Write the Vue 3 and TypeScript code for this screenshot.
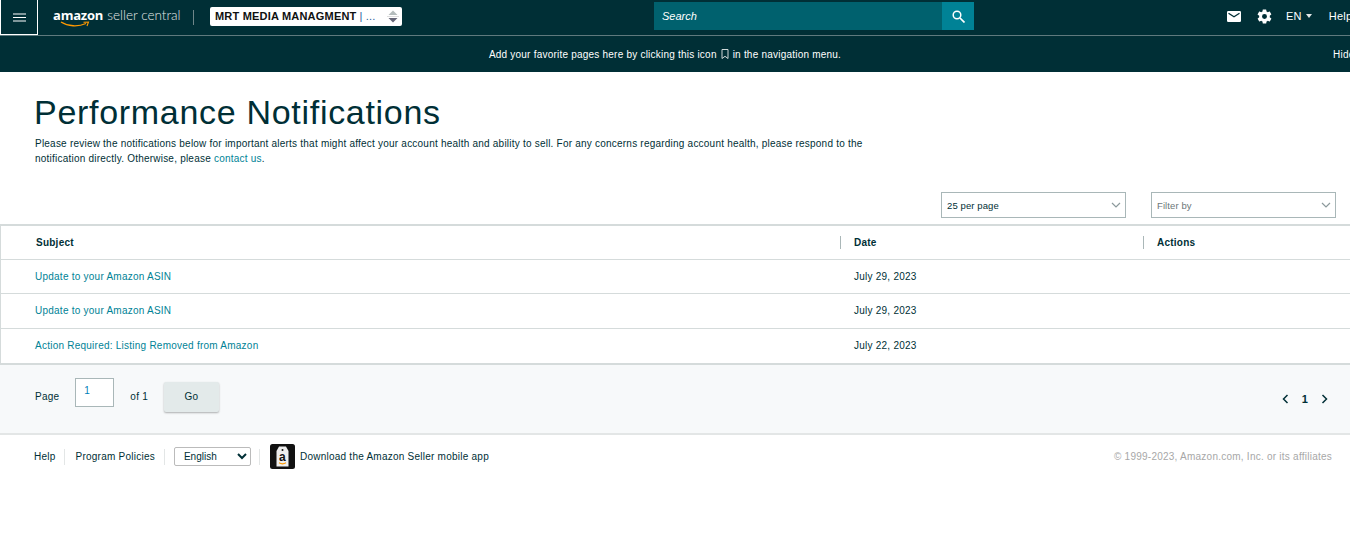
<script setup lang="ts">
const rows = [
  { subject: 'Update to your Amazon ASIN', date: 'July 29, 2023' },
  { subject: 'Update to your Amazon ASIN', date: 'July 29, 2023' },
  { subject: 'Action Required: Listing Removed from Amazon', date: 'July 22, 2023' },
]
</script>

<template>
  <div class="page">
    <header class="topbar">
      <div class="nav">
        <button class="menu-btn" aria-label="Menu">
          <svg width="13" height="9" viewBox="0 0 13 9"><path d="M0 1h13M0 4.500h13M0 8h13" stroke="#fff" stroke-width="1.200" fill="none" /></svg>
        </button>
        <div class="logo">
          <span class="logo-amazon">amazon</span>
          <span class="logo-seller">seller central</span>
          <svg class="logo-smile" width="30" height="7" viewBox="0 0 30 7">
            <path d="M1 1C8 5.500 18 6 26 2.500" stroke="#f90" stroke-width="1.300" fill="none" />
            <path d="M23.500 1.200L28.500 1L27 5" stroke="#f90" stroke-width="1.100" fill="none" />
          </svg>
        </div>
        <div class="logo-sep"></div>
        <div class="account">
          <span class="account-name">MRT MEDIA MANAGMENT</span>
          <span class="account-more">| ...</span>
          <svg class="account-arrows" width="14" height="16" viewBox="0 0 14 16">
            <path d="M7 2.500l4.500 4.500h-9z" fill="#b4bcbc" />
            <path d="M1 8.500h12" stroke="#ddd" stroke-width="1" />
            <path d="M2.500 10h9L7 14.500z" fill="#667" />
          </svg>
        </div>
        <div class="search">
          <span class="search-input">Search</span>
          <button class="search-btn" aria-label="Search">
            <svg width="13" height="13" viewBox="0 0 13 13">
              <circle cx="5" cy="5" r="3.800" stroke="#fff" stroke-width="1.500" fill="none" />
              <path d="M8 8l4.500 4.500" stroke="#fff" stroke-width="1.700" />
            </svg>
          </button>
        </div>
        <div class="nav-right">
          <svg class="mail" width="14" height="11" viewBox="0 0 14 11">
            <rect width="14" height="11" rx="1.200" fill="#fff" />
            <path d="M1.500 2.200L7 5.800l5.500-3.600" stroke="#002f36" stroke-width="1.300" fill="none" />
          </svg>
          <svg class="gear" width="17" height="17" viewBox="0 0 24 24">
            <path fill="#fff" d="M19.400 13c.04-.32.1-.66.1-1s-.06-.68-.1-1l2.100-1.650c.2-.15.25-.42.12-.64l-2-3.460c-.12-.22-.39-.3-.61-.22l-2.490 1c-.52-.4-1.080-.73-1.690-.98l-.38-2.650A.49.49 0 0 0 14 2h-4c-.25 0-.46.18-.49.42l-.38 2.650c-.61.25-1.170.59-1.690.98l-2.490-1c-.23-.09-.49 0-.61.22l-2 3.460c-.13.22-.07.49.12.64L4.570 11c-.04.32-.07.66-.07 1s.03.680.07 1l-2.110 1.650c-.19.15-.25.42-.12.64l2 3.460c.12.22.39.3.61.22l2.490-1c.52.4 1.080.73 1.690.98l.38 2.650c.03.24.24.42.49.42h4c.25 0 .46-.18.49-.42l.38-2.650c.61-.25 1.170-.59 1.690-.98l2.490 1c.23.09.49 0 .61-.22l2-3.460c.12-.22.07-.49-.12-.64L19.400 13zM12 15.500a3.500 3.500 0 1 1 0-7 3.500 3.500 0 0 1 0 7z" />
          </svg>
          <span class="lang">EN<i class="caret"></i></span>
          <span class="help">Help</span>
        </div>
      </div>
      <div class="banner">
        <span class="banner-text">
          Add your favorite pages here by clicking this icon
          <svg class="bookmark" width="8" height="10" viewBox="0 0 8 10"><path d="M1 .5h6v9L4 7.300 1 9.500z" stroke="#cfd8d8" fill="none" /></svg>
          in the navigation menu.
        </span>
        <span class="banner-hide">Hide</span>
      </div>
    </header>

    <main>
      <section class="intro">
        <h1>Performance Notifications</h1>
        <p>
          Please review the notifications below for important alerts that might affect your account health and ability to sell. For any concerns regarding account health, please respond to the notification directly. Otherwise, please
          <a class="contact">contact us</a>.
        </p>
      </section>

      <div class="filters">
        <div class="select select-page">
          <span>25 per page</span>
          <svg width="10" height="6" viewBox="0 0 10 6"><path d="M1 1l4 4 4-4" stroke="#8c9a9c" stroke-width="1.200" fill="none" /></svg>
        </div>
        <div class="select select-filter">
          <span>Filter by</span>
          <svg width="10" height="6" viewBox="0 0 10 6"><path d="M1 1l4 4 4-4" stroke="#8c9a9c" stroke-width="1.200" fill="none" /></svg>
        </div>
      </div>

      <div class="table">
        <div class="row head">
          <div class="cell subject">Subject</div>
          <div class="cell date">Date</div>
          <div class="cell actions">Actions</div>
        </div>
        <div v-for="(row, i) in rows" :key="i" class="row item">
          <div class="cell subject"><a>{{ row.subject }}</a></div>
          <div class="cell date">{{ row.date }}</div>
          <div class="cell actions"></div>
        </div>
      </div>

      <div class="pager">
        <span class="pager-label">Page</span>
        <div class="page-input">1</div>
        <span class="pager-of">of 1</span>
        <button class="go">Go</button>
        <div class="pager-nav">
          <svg width="7" height="10" viewBox="0 0 7 10"><path d="M5.500 1L1.500 5l4 4" stroke="#002f36" stroke-width="1.500" fill="none" /></svg>
          <b>1</b>
          <svg width="7" height="10" viewBox="0 0 7 10"><path d="M1.500 1l4 4-4 4" stroke="#002f36" stroke-width="1.500" fill="none" /></svg>
        </div>
      </div>
    </main>

    <footer class="footer">
      <a class="foot-link">Help</a>
      <i class="foot-sep sep-help"></i>
      <a class="foot-link">Program Policies</a>
      <i class="foot-sep"></i>
      <select class="foot-lang"><option>English</option></select>
      <i class="foot-sep sep-app"></i>
      <svg class="app-icon" width="25" height="25" viewBox="0 0 25 25">
        <rect width="25" height="25" rx="2.500" fill="#111" />
        <path d="M9 2.500h7L18.500 7v15.500h-12V7z" fill="#eee" />
        <circle cx="12.500" cy="6" r="1" fill="#111" />
        <path d="M9 18.800c2.200 1.300 4.800 1.300 7 0" stroke="#f90" stroke-width="1.100" fill="none" />
        <text x="12.500" y="17" text-anchor="middle" class="app-a">a</text>
      </svg>
      <a class="foot-link">Download the Amazon Seller mobile app</a>
      <span class="copyright">© 1999-2023, Amazon.com, Inc. or its affiliates</span>
    </footer>
  </div>
</template>

<style>
html, body {
  margin: 0;
  overflow: hidden;
  background: #fff;
}
</style>

<style scoped>
.page {
  width: 1350px;
  height: 533px;
  overflow: hidden;
  font-family: "Liberation Sans", Arial, sans-serif;
  font-size: 10px;
  letter-spacing: 0.24px;
  color: #002f36;
}

.topbar {
  background: #002f36;
  color: #fff;
}

.nav {
  display: flex;
  align-items: center;
  height: 35px;
  border-bottom: 1px solid #5f7a7e;
}

.menu-btn {
  width: 38px;
  height: 35px;
  flex: none;
  padding: 0;
  background: transparent;
  border: 1px solid #fff;
  border-top: 0;
  display: flex;
  align-items: center;
  justify-content: center;
}

.logo {
  position: relative;
  display: flex;
  align-items: baseline;
  margin: -9px 0 0 15px;
  width: 126px;
  height: 24px;
  white-space: nowrap;
  letter-spacing: 0;
}

.logo-amazon {
  font-family: "Open Sans", sans-serif;
  font-size: 13px;
  line-height: 28px;
  font-weight: 700;
  letter-spacing: -0.2px;
}

.logo-seller {
  font-family: Lato, sans-serif;
  font-size: 13.500px;
  font-weight: 300;
  margin-left: 4px;
  color: #e3e8e8;
}

.logo-smile {
  position: absolute;
  left: 7px;
  top: 20px;
}

.logo-sep {
  width: 1px;
  height: 15px;
  background: #6f8689;
  margin-left: 14px;
  flex: none;
}

.account {
  display: flex;
  align-items: center;
  flex: none;
  width: 192px;
  height: 19px;
  margin: -3px 0 0 16px;
  padding-left: 5px;
  box-sizing: border-box;
  background: #fff;
  border-radius: 2px;
  font-size: 11px;
  font-weight: 700;
  letter-spacing: 0.2px;
  color: #0f1111;
  white-space: nowrap;
}

.account-more {
  margin-left: 3px;
  font-weight: 400;
  color: #1f5f9e;
}

.account-arrows {
  margin-left: auto;
  margin-right: 2px;
}

.search {
  display: flex;
  flex: none;
  width: 320px;
  height: 28px;
  margin-left: 252px;
  margin-top: -3px;
  background: #00616e;
}

.search-input {
  flex: 1;
  padding-left: 8px;
  font-size: 11px;
  line-height: 28px;
  font-style: italic;
  color: #fff;
  letter-spacing: 0;
}

.search-btn {
  width: 32px;
  height: 28px;
  padding: 0;
  border: 0;
  background: #008296;
  display: flex;
  align-items: center;
  justify-content: center;
}

.nav-right {
  display: flex;
  align-items: center;
  margin: -3px 0 0 253px;
  font-size: 11px;
  white-space: nowrap;
  flex: none;
}

.gear {
  margin-left: 15px;
}

.lang {
  margin-left: 13px;
  display: flex;
  align-items: center;
}

.caret {
  width: 0;
  height: 0;
  margin-left: 4px;
  border: 3.500px solid transparent;
  border-top: 4px solid #e3e8e8;
  border-bottom: 0;
}

.help {
  margin-left: 17px;
}

.banner {
  position: relative;
  height: 36px;
  display: flex;
  align-items: center;
  justify-content: center;
  box-sizing: border-box;
  font-size: 10px;
  letter-spacing: 0.22px;
  white-space: nowrap;
}

.banner-text {
  margin-left: -20px;
}

.bookmark {
  vertical-align: -1px;
  margin: 0 1px;
}

.banner-hide {
  position: absolute;
  left: 1333px;
}

.intro {
  padding: 20px 0 0 35px;
}

h1 {
  margin: 0 0 0 -1px;
  font-size: 34px;
  line-height: 40px;
  font-weight: 400;
  letter-spacing: 0.7px;
  color: #002f36;
}

.intro p {
  margin: 4px 0 0;
  width: 840px;
  font-size: 10px;
  line-height: 15px;
  letter-spacing: 0.22px;
}

.contact {
  color: #008296;
}

.filters {
  display: flex;
  justify-content: flex-end;
  gap: 25px;
  margin-top: 26px;
  padding-right: 14px;
}

.select {
  display: flex;
  align-items: center;
  justify-content: space-between;
  width: 185px;
  height: 26px;
  box-sizing: border-box;
  padding: 0 4px 0 5px;
  border: 1px solid #a9b7b8;
  background: #fff;
  font-size: 9.500px;
  letter-spacing: 0.1px;
}

.select-filter {
  color: #6c7778;
}

.table {
  margin-top: 6px;
  border-top: 2px solid #d5dbdb;
  border-left: 1px solid #d5dbdb;
  border-bottom: 2px solid #d5dbdb;
}

.row {
  display: grid;
  grid-template-columns: 839px 303px 1fr;
  align-items: center;
  box-sizing: border-box;
}

.head {
  height: 34px;
  padding-bottom: 1px;
  border-bottom: 1px solid #d5dbdb;
  font-weight: 700;
}

.item {
  height: 34.300px;
  padding-bottom: 1px;
  border-bottom: 1px solid #d5dbdb;
}

.item:last-child {
  border-bottom: 0;
}

.cell {
  padding-left: 34px;
}

.head .cell {
  padding-left: 35px;
}

.item .date, .item .actions {
  padding-left: 14px;
}

.head .date, .head .actions {
  padding-left: 13px;
  border-left: 1px solid #aab7b8;
  line-height: 13px;
}

.item a {
  color: #008296;
}

.pager {
  display: flex;
  align-items: center;
  height: 70.600px;
  box-sizing: border-box;
  padding: 0 22px 6px 35px;
  background: #f7f9fa;
  border-bottom: 2px solid #e3e6e6;
}

.page-input {
  width: 39px;
  height: 29px;
  box-sizing: border-box;
  margin: 0 0 8px 16px;
  padding: 6px 0 0 8px;
  border: 1px solid #a9b7b8;
  background: #fff;
  color: #007eb9;
}

.pager-of {
  margin-left: 16px;
}

.go {
  width: 55px;
  height: 30px;
  margin: 1px 0 0 16px;
  padding: 0;
  border: 0;
  border-radius: 2px;
  background: #e3eaea;
  box-shadow: 0 1px 2px rgba(0, 0, 0, 0.3);
  color: #002f36;
  font-family: inherit;
  font-size: 10px;
  letter-spacing: 0.24px;
}

.pager-nav {
  display: flex;
  align-items: center;
  gap: 13px;
  margin-left: auto;
  margin-top: 6px;
  font-size: 11px;
}

.footer {
  display: flex;
  align-items: center;
  height: 43px;
  padding: 0 18px 0 34px;
}

.foot-sep {
  width: 1px;
  height: 16px;
  background: #e3e6e6;
  margin: 0 9px;
}

.sep-help {
  margin: 0 11px 0 8px;
}

.sep-app {
  margin: 0 10px 0 8px;
}

.foot-lang {
  width: 77px;
  height: 19px;
  padding-left: 5px;
  border: 1px solid #bbb;
  border-radius: 2px;
  background: #fff;
  color: #002f36;
  font-family: inherit;
  font-size: 10px;
}

.app-icon {
  margin-right: 5px;
}

.app-a {
  font-family: "Liberation Sans", sans-serif;
  font-size: 12px;
  font-weight: 700;
  fill: #111;
}

.copyright {
  margin-left: auto;
  color: #a7a7a7;
}
</style>
